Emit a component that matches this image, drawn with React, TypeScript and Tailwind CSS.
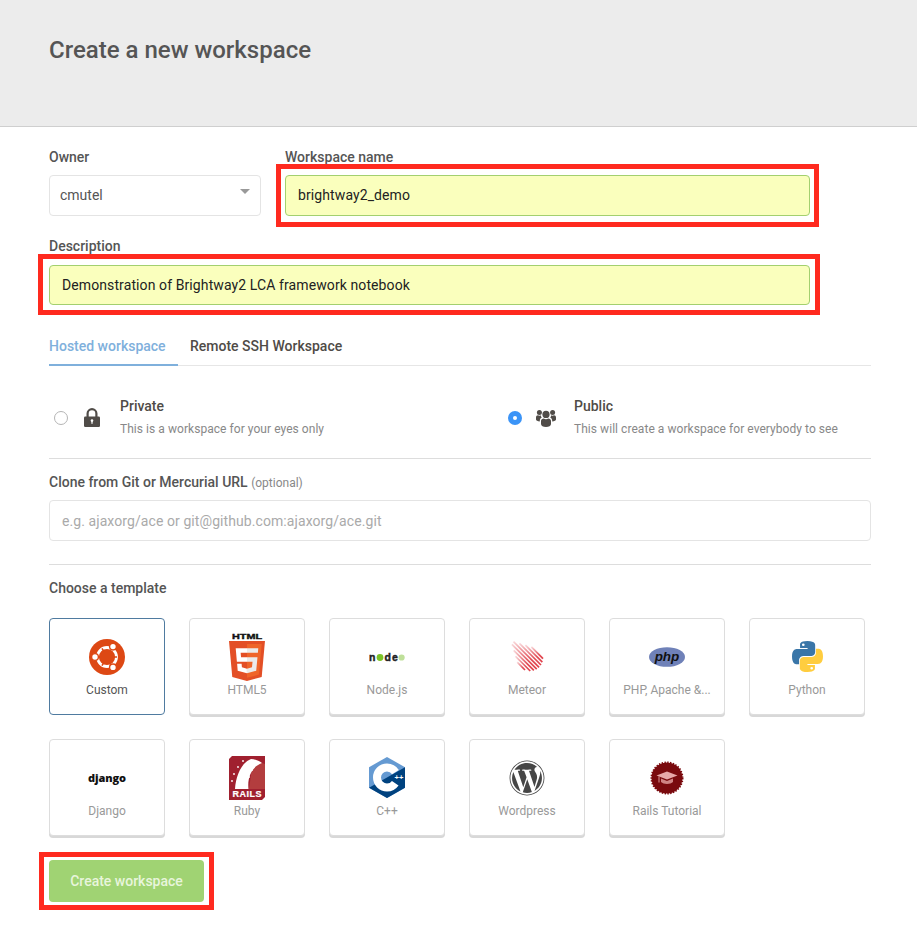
import type { ReactNode } from "react";
import { FaWordpress } from "react-icons/fa";

const UbuntuLogo = () => (
    <svg width="36" height="36" viewBox="0 0 36 36">
        <circle cx="18" cy="18" r="18" fill="#dd4814" />
        <circle cx="18" cy="18" r="9.5" fill="none" stroke="#fff" strokeWidth="2.8" />
        <path d="M28 18H24M13 9.3L15 12.8M13 26.7L15 23.2" stroke="#dd4814" strokeWidth="1.6" />
        <circle cx="24" cy="7.6" r="3.4" fill="#fff" stroke="#dd4814" strokeWidth="1.4" />
        <circle cx="6" cy="18" r="3.4" fill="#fff" stroke="#dd4814" strokeWidth="1.4" />
        <circle cx="24" cy="28.4" r="3.4" fill="#fff" stroke="#dd4814" strokeWidth="1.4" />
    </svg>
);

const Html5Logo = () => (
    <svg width="36" height="49" viewBox="0 0 36 49">
        <text x="18" y="6.5" textAnchor="middle" fontSize="8" fontWeight="700" fontFamily="Liberation Sans, sans-serif" fill="#111" stroke="#111" strokeWidth="0.4" textLength="30" lengthAdjust="spacingAndGlyphs">HTML</text>
        <g transform="translate(-2.4 9) scale(0.0798 0.078)">
            <path fill="#e34f26" d="M71 460L30 0h451l-41 460-185 52" />
            <path fill="#ef652a" d="M256 472l149-41 35-394H256" />
            <path fill="#fff" d="M256 208h-75l-5-58h80V94H114l15 171h127zm-1 147l-63-17-4-45h-56l7 89 116 32z" />
            <path fill="#ebebeb" d="M255 208v57h70l-7 73-63 17v59l116-32 16-174zm0-114v56h137l5-56z" />
        </g>
    </svg>
);

const NodeLogo = () => (
    <svg width="36" height="12" viewBox="0 0 36 12" fill="#222" stroke="#222" strokeWidth="0.4" fontSize="10.5" fontWeight="700" fontFamily="Liberation Sans, sans-serif">
        <text x="0" y="10">n</text>
        <circle cx="11" cy="6.5" r="3.4" fill="#7cc327" stroke="none" />
        <text x="15.5" y="10">d</text>
        <text x="23" y="10">e</text>
        <circle cx="32.6" cy="6.5" r="3.1" fill="#bfe09a" stroke="none" />
    </svg>
);

// stripes of the meteor end on a circle round (21, 18)
const METEOR_STRIPES = [-14, -9.8, -5.6, -1.4, 2.8, 7, 11.2, 15.4].map(k => {
    const p = (k - 3) / Math.SQRT2;
    const half = Math.sqrt(169 - p * p);
    const end = 27.6 + half;
    const start = 2 + Math.abs(k - 1) * 1.3;
    const at = (s: number) => [(s * Math.SQRT2 + k) / 2, (s * Math.SQRT2 - k) / 2];
    return { from: at(start), to: at(end) };
});

const MeteorLogo = () => (
    <svg width="36" height="34" viewBox="0 0 36 34">
        <defs>
            <linearGradient id="meteor" x1="0" y1="0" x2="1" y2="1">
                <stop offset="0" stopColor="#e0414b" stopOpacity="0.2" />
                <stop offset="0.7" stopColor="#e0414b" stopOpacity="0.95" />
                <stop offset="1" stopColor="#e0414b" />
            </linearGradient>
        </defs>
        {METEOR_STRIPES.map((s, i) => (
            <line key={i} x1={s.from[0]} y1={s.from[1]} x2={s.to[0]} y2={s.to[1]} stroke="url(#meteor)" strokeWidth="1.7" />
        ))}
    </svg>
);

const PhpLogo = () => (
    <svg width="36" height="20" viewBox="0 0 36 20">
        <ellipse cx="18" cy="10" rx="18" ry="9.8" fill="#6f81b8" />
        <text x="18" y="14" textAnchor="middle" fontSize="13.5" fontWeight="700" fontStyle="italic" fontFamily="Liberation Sans, sans-serif" fill="#111">php</text>
    </svg>
);

const PythonLogo = () => {
    const snake = "M54.9 0C26.9 0 28.6 12.2 28.6 12.2l.03 12.6h26.7v3.8H18C18 28.6 0 26.5 0 54.8s15.7 27.3 15.7 27.3h9.4V69s-.5-15.7 15.5-15.7h26.6s15 .2 15-14.5V14.4S84.5 0 54.9 0zm-14.8 8.5a4.8 4.8 0 1 1 0 9.6 4.8 4.8 0 0 1 0-9.6z";
    return (
        <svg width="31" height="31" viewBox="0 0 110 110">
            <path fill="#3a76a8" d={snake} />
            <path fill="#ffcd3f" d={snake} transform="rotate(180 55 55)" />
        </svg>
    );
};

const RailsLogo = () => (
    <svg width="36" height="44" viewBox="0 0 36 44">
        <path d="M3 0H36V41L33 44H0V3Z" fill="#a0202f" />
        <path d="M24 4L36 8V33H20Z" fill="#c2564a" opacity="0.55" />
        <path d="M6 33C7 20 12 7 22 3C26 3 30 5 33 7C24 10 18 20 19.5 33Z" fill="#fff" />
        <circle cx="14" cy="5" r="0.9" fill="#fff" />
        <circle cx="9" cy="11" r="0.9" fill="#fff" />
        <circle cx="5" cy="18" r="0.9" fill="#fff" />
        <circle cx="3" cy="25" r="0.9" fill="#fff" />
        <circle cx="23" cy="14" r="0.9" fill="#fff" />
        <circle cx="20" cy="21" r="0.9" fill="#fff" />
        <text x="18" y="41" textAnchor="middle" fontSize="9" fontWeight="700" fontFamily="Liberation Sans, sans-serif" fill="#fff" stroke="#fff" strokeWidth="0.2" textLength="29" lengthAdjust="spacing">RAILS</text>
    </svg>
);

const CppLogo = () => (
    <svg width="36" height="41" viewBox="0 0 36 41">
        <path d="M18 0L36 10.2V30.8L18 41L0 30.8V10.2Z" fill="#659ad2" />
        <path d="M36 10.2V30.8L18 41L0 30.8L32 12.5Z" fill="#00427f" />
        <circle cx="18" cy="20.5" r="10" fill="none" stroke="#fff" strokeWidth="8" strokeDasharray="50.8 12" strokeDashoffset="-6" />
        <text x="30" y="23" textAnchor="middle" fontSize="7.5" fontWeight="700" fontFamily="Liberation Sans, sans-serif" fill="#fff">++</text>
    </svg>
);

const RailsTutorialLogo = () => (
    <svg width="34" height="34" viewBox="0 0 34 34">
        <circle cx="17" cy="17" r="15.5" fill="#7a0a0e" stroke="#7a0a0e" strokeWidth="2" strokeDasharray="1.4 1.4" />
        <path d="M17 10.5L27.5 14.5L17 18.5L6.5 14.5Z" fill="#e8a8a8" />
        <path d="M11 17.5V21C13.5 23.5 20.5 23.5 23 21V17.5L17 20Z" fill="#cf8484" />
        <path d="M9 15.5V21.5" stroke="#e8a8a8" strokeWidth="0.9" />
    </svg>
);

const LockIcon = () => (
    <svg width="16" height="19" viewBox="0 0 16 19">
        <path d="M3.6 9V5.6a4.4 4.4 0 0 1 8.8 0V9" fill="none" stroke="#504c48" strokeWidth="2.2" />
        <rect x="0" y="8.6" width="16" height="10.4" rx="1.2" fill="#504c48" />
        <circle cx="8" cy="12.6" r="1.3" fill="#fff" />
        <rect x="7.4" y="12.6" width="1.2" height="3.2" fill="#fff" />
    </svg>
);

const UsersIcon = () => (
    <svg width="20" height="18" viewBox="0 0 20 18" fill="#504c48">
        <circle cx="10" cy="5.4" r="3.6" />
        <path d="M5 12c0-1.6 1.2-2.6 2.8-2.6.6.5 1.3.8 2.2.8s1.6-.3 2.2-.8c1.6 0 2.8 1 2.8 2.6v3c0 1.8-2.2 3-5 3s-5-1.2-5-3z" />
        <circle cx="3.4" cy="3.6" r="2.5" />
        <circle cx="16.6" cy="3.6" r="2.5" />
        <path d="M0 8.4c0-1.4.9-2.2 2-2.2.4.3.9.5 1.4.5.5 0 1-.1 1.3-.4.1.9.5 1.6 1.1 2.2C4.6 9 3.8 10.2 3.8 11.8v.6C1.6 12.4 0 11.6 0 10.6z" />
        <path d="M20 8.4c0-1.4-.9-2.2-2-2.2-.4.3-.9.5-1.4.5-.5 0-1-.1-1.3-.4-.1.9-.5 1.6-1.1 2.2 1.2.5 2 1.7 2 3.3v.6c2.2 0 3.8-.8 3.8-1.8z" />
    </svg>
);

const TEMPLATES: { name: string; logo: ReactNode; active?: boolean }[] = [
    { name: "Custom", logo: <UbuntuLogo />, active: true },
    { name: "HTML5", logo: <Html5Logo /> },
    { name: "Node.js", logo: <NodeLogo /> },
    { name: "Meteor", logo: <MeteorLogo /> },
    { name: "PHP, Apache &...", logo: <PhpLogo /> },
    { name: "Python", logo: <PythonLogo /> },
    { name: "Django", logo: <span className="text-[11px] leading-none font-extrabold text-[#111] tracking-[-0.1px] font-['Open_Sans',sans-serif]">django</span> },
    { name: "Ruby", logo: <RailsLogo /> },
    { name: "C++", logo: <CppLogo /> },
    { name: "Wordpress", logo: <FaWordpress size={36} color="#464646" /> },
    { name: "Rails Tutorial", logo: <RailsTutorialLogo /> },
];

// red annotation frames drawn on top of the screenshot
const Frame = ({ className }: { className: string }) => (
    <span className={`absolute pointer-events-none border-[5px] border-[#ff2a1f] ${className}`} />
);

const Label = ({ children }: { children: ReactNode }) => (
    <div className="text-[14px] leading-[20px] font-medium text-[#555]">{children}</div>
);

const RadioOption = ({ checked, icon, title, text, className }: { checked?: boolean; icon: ReactNode; title: string; text: string; className: string }) => (
    <div className={`flex items-center pl-[5px] ${className}`}>
        {checked ? (
            <span className="w-[14px] h-[14px] rounded-full bg-[#3b94f7] flex items-center justify-center">
                <span className="w-[4px] h-[4px] rounded-full bg-white" />
            </span>
        ) : (
            <span className="w-[14px] h-[14px] rounded-full border border-[#b5b5b5] bg-white" />
        )}
        <span className="w-[20px] ml-[14px] flex justify-center">{icon}</span>
        <div className="ml-[18px]">
            <div className="text-[14px] leading-[20px] font-medium text-[#4f4b47]">{title}</div>
            <div className="mt-[3px] text-[12px] leading-[20px] tracking-[0.05px] text-[#888]">{text}</div>
        </div>
    </div>
);

export default function App() {
    return (
        <div className="min-h-[942px] bg-white font-['Roboto',sans-serif]">
            <div className="h-[127px] bg-[#ececec] border-b border-[#cfcfcf] pl-[49px] pt-[35px]">
                <h1 className="text-[24px] leading-[30px] font-medium text-[#555]">Create a new workspace</h1>
            </div>

            <div className="pl-[49px] pr-[46px] pt-[20px]">
                <div className="flex">
                    <div className="w-[212px]">
                        <Label>Owner</Label>
                        <div className="relative mt-[8px] h-[41px] border border-[#e4e4e4] rounded-[4px] pl-[10px] flex items-center text-[14px] text-[#555]">
                            cmutel
                            <span className="absolute right-[10px] top-[13px] w-0 h-0 border-x-[5px] border-x-transparent border-t-[5px] border-t-[#999]" />
                        </div>
                    </div>
                    <div className="ml-[24px] w-[525px]">
                        <Label>Workspace name</Label>
                        <div className="relative mt-[8px]">
                            <input
                                type="text"
                                defaultValue="brightway2_demo"
                                className="w-full h-[41px] bg-[#faffbd] border border-[#a3d06f] rounded-[4px] pl-[12px] pb-[1px] text-[14px] tracking-[0.1px] text-[#222]"
                            />
                            <Frame className="-left-[9px] -right-[9px] -top-[11px] -bottom-[11px]" />
                        </div>
                    </div>
                </div>

                <div className="mt-[20px] w-[761px]">
                    <Label>Description</Label>
                    <div className="relative mt-[9px]">
                        <input
                            type="text"
                            defaultValue="Demonstration of Brightway2 LCA framework notebook"
                            className="w-full h-[40px] bg-[#faffbd] border border-[#a3d06f] rounded-[4px] pl-[12px] text-[14px] tracking-[0.1px] text-[#222]"
                        />
                        <Frame className="-left-[11px] -right-[10px] -top-[11px] -bottom-[10px]" />
                    </div>
                </div>

                <div className="mt-[31px] flex border-b border-[#e6e6e6] text-[14px] leading-[20px] font-medium h-[30px]">
                    <div className="w-[129px] h-[30px] border-b-2 border-[#7fb0dc] text-[#7fb0dc]">Hosted workspace</div>
                    <div className="ml-[12px] text-[#4f4b47]">Remote SSH Workspace</div>
                </div>

                <div className="mt-[30px] flex">
                    <RadioOption className="w-[454px]" icon={<LockIcon />} title="Private" text="This is a workspace for your eyes only" />
                    <RadioOption checked className="flex-1" icon={<UsersIcon />} title="Public" text="This will create a workspace for everybody to see" />
                </div>

                <div className="mt-[19px] border-t border-[#ddd]" />

                <div className="mt-[13px] text-[14px] leading-[20px] font-medium text-[#555]">
                    Clone from Git or Mercurial URL <span className="text-[12px] font-normal text-[#888]">(optional)</span>
                </div>
                <input
                    type="text"
                    placeholder="e.g. ajaxorg/ace or git@github.com:ajaxorg/ace.git"
                    className="mt-[7px] block w-full h-[41px] border border-[#e4e4e4] rounded-[4px] pl-[12px] text-[14px] tracking-[0.08px] placeholder:text-[#aaa]"
                />

                <div className="mt-[23px] border-t border-[#ddd]" />

                <div className="mt-[13px]"><Label>Choose a template</Label></div>

                <div className="mt-[20px] flex flex-wrap gap-6">
                    {TEMPLATES.map(t => (
                        <div
                            key={t.name}
                            className={`w-[116px] h-[97px] bg-white rounded-[4px] border pt-[14px] ${t.active ? "border-[#4f7ba0]" : "border-[#ddd] shadow-[0_2px_0_#d8d8d8]"}`}
                        >
                            <div className="h-[47px] flex items-center justify-center">{t.logo}</div>
                            <div className={`text-center whitespace-nowrap text-[12px] leading-[20px] ${t.active ? "text-[#555]" : "text-[#999]"}`}>{t.name}</div>
                        </div>
                    ))}
                </div>

                <div className="relative mt-[24px] w-[155px]">
                    <button className="w-full h-[42px] pt-[1px] rounded-[4px] bg-[#a0d373] text-[14px] font-medium text-[#e8f5dc]">Create workspace</button>
                    <Frame className="-left-[10px] -right-[10px] -top-[8px] -bottom-[8px]" />
                </div>
            </div>
        </div>
    );
}
